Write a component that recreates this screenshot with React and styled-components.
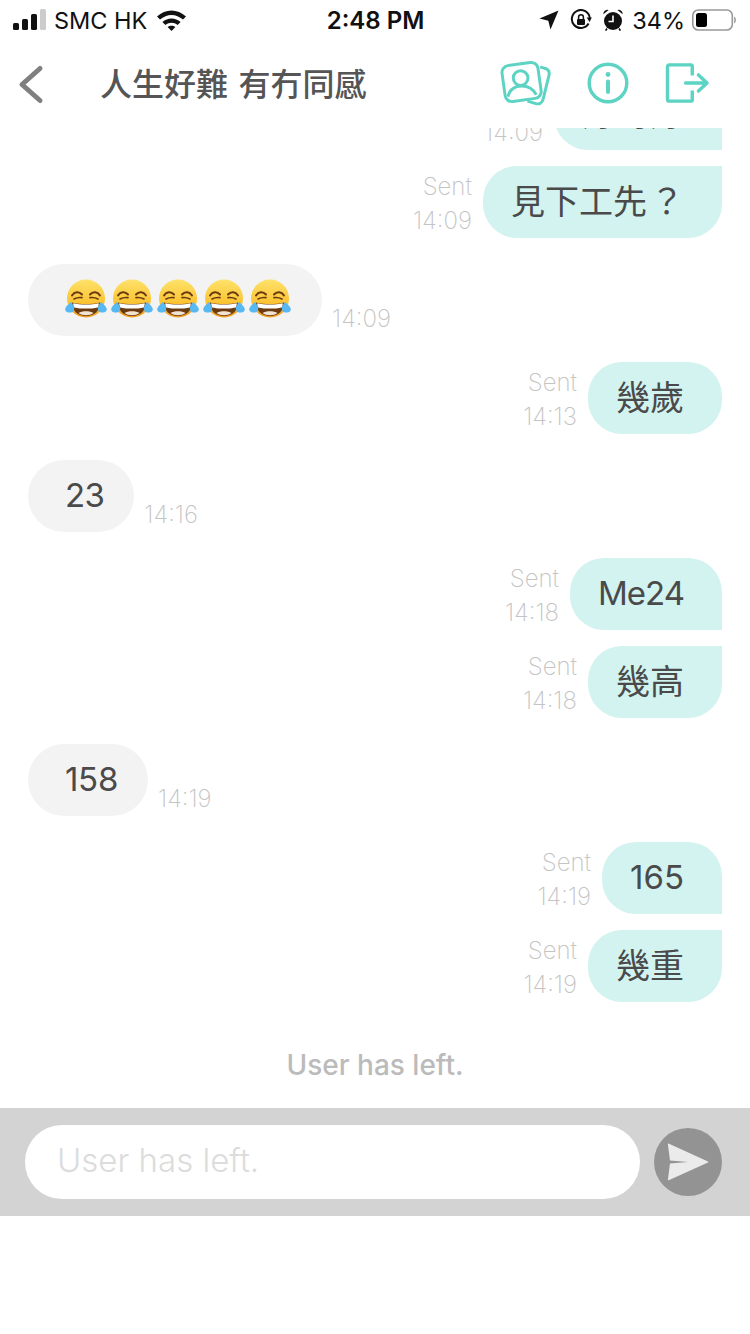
import React from 'react';
import styled, { createGlobalStyle } from 'styled-components';

const GlobalStyle = createGlobalStyle`
  html, body {
    margin: 0;
    padding: 0;
    background: #fff;
    font-family: Inter, "Noto Sans CJK TC", sans-serif;
  }
  * { box-sizing: border-box; }
`;

const TEAL = '#5dd3c3';

const Page = styled.div`
  width: 750px;
  height: 1334px;
  display: flex;
  flex-direction: column;
  overflow: hidden;
  background: #fff;
`;

const StatusBar = styled.div`
  height: 40px;
  flex: none;
  display: flex;
  align-items: center;
  justify-content: space-between;
  padding: 0 14px 0 13px;
  color: #111;
  font-size: 23.5px;
`;

const StatusSide = styled.div`
  width: 300px;
  display: flex;
  align-items: center;
  justify-content: ${(p) => (p.$end ? 'flex-end' : 'flex-start')};
`;

const Carrier = styled.span`
  margin: 0 9px 0 8px;
`;

const Clock = styled.span`
  margin-left: 2px;
  font-weight: 600;
  font-size: 24px;
`;

const StatusIcons = styled.div`
  display: flex;
  align-items: center;
  gap: 11px;
`;

const Percent = styled.span`
  margin: 0 7px 0 9px;
`;

const Header = styled.div`
  height: 88px;
  flex: none;
  display: flex;
  align-items: center;
  padding: 0 40px 0 18px;
`;

const BackIcon = styled.svg`
  width: 26px;
  height: 42px;
  flex: none;
`;

const Title = styled.div`
  margin: 0 0 4px 56px;
  flex: 1;
  font-size: 32px;
  font-weight: 500;
  color: #555;
  white-space: nowrap;
  word-spacing: 2px;
`;

const HeaderIcons = styled.div`
  display: flex;
  align-items: center;
  gap: 36px;
  margin-bottom: 2px;
`;

const MessageList = styled.div`
  height: 980px;
  flex: none;
  overflow: hidden;
  display: flex;
  flex-direction: column;
  justify-content: flex-end;
  padding: 0 28px;
`;

const Row = styled.div`
  flex: none;
  display: flex;
  gap: ${(p) => (p.$sent ? 11 : 10)}px;
  align-items: flex-end;
  justify-content: ${(p) => (p.$sent ? 'flex-end' : 'flex-start')};
  margin-top: ${(p) => (p.$grouped ? 16 : 26)}px;
`;

const Meta = styled.div`
  font-size: 24px;
  font-weight: 200;
  line-height: 34px;
  color: #c4c4c4;
  text-align: right;
`;

const cornerFor = (kind) => {
  if (kind === 'first') return '34px 34px 0 34px';
  if (kind === 'last') return '34px 0 34px 34px';
  return '34px';
};

const bubblePadding = (p) => {
  if (p.$emoji) return '0 29px 2px 35px';
  const bottom = p.$tracking !== undefined ? 2 : 6;
  return p.$sent ? `0 38px ${bottom}px 28px` : `0 30px ${bottom}px 37px`;
};

const Bubble = styled.div`
  height: 72px;
  display: flex;
  align-items: center;
  border-radius: ${(p) => (p.$sent ? cornerFor(p.$corner) : '36px')};
  background: ${(p) => (p.$sent ? '#d2f3ef' : '#f3f3f3')};
  padding: ${bubblePadding};
  color: #4a4a4a;
  font-size: ${(p) => (p.$tracking !== undefined ? '33px' : '34px')};
  letter-spacing: ${(p) => p.$tracking || 0}px;
  white-space: nowrap;
`;

const Notice = styled.div`
  flex: none;
  margin-top: 45px;
  margin-bottom: 25px;
  height: 36px;
  line-height: 36px;
  text-align: center;
  font-size: 28px;
  font-weight: 500;
  color: #bbb;
`;

const Composer = styled.div`
  height: 108px;
  flex: none;
  display: flex;
  align-items: center;
  gap: 14px;
  padding: 0 28px 0 25px;
  background: #d3d3d3;
`;

const InputBox = styled.div`
  flex: 1;
  height: 74px;
  display: flex;
  align-items: center;
  padding: 0 0 4px 32px;
  border-radius: 37px;
  background: #fff;
  color: #dcdcdc;
  font-size: 33px;
  font-weight: 300;
`;

const SendButton = styled.div`
  width: 68px;
  height: 68px;
  flex: none;
  display: flex;
  align-items: center;
  justify-content: center;
  border-radius: 50%;
  background: #939393;
`;

const EmojiRow = styled.div`
  display: flex;
`;

const EmojiSvg = styled.svg`
  width: 46px;
  height: 46px;
  display: block;
  flex: none;
`;

const SignalIcon = () => (
  <svg width="33" height="22" viewBox="0 0 33 22">
    <rect x="0" y="14" width="6" height="7" rx="1.5" fill="#111" />
    <rect x="9" y="10" width="6" height="11" rx="1.5" fill="#111" />
    <rect x="18" y="5" width="6" height="16" rx="1.5" fill="#111" />
    <rect x="27" y="0" width="6" height="21" rx="1.5" fill="#ccc" />
  </svg>
);

const WifiIcon = () => (
  <svg width="31" height="22" viewBox="0 0 31 22">
    <path d="M1 7.5C9.5 -0.5 21.5 -0.5 30 7.5L27 10.6C20.2 4.3 10.8 4.3 4 10.6Z" fill="#111" />
    <path d="M6.4 13C11.6 8.2 19.4 8.2 24.6 13L21.6 16C18 12.9 13 12.9 9.4 16Z" fill="#111" />
    <path d="M11.6 18.1C13.8 16.3 17.2 16.3 19.4 18.1L15.5 22Z" fill="#111" />
  </svg>
);

const LocationIcon = () => (
  <svg width="20" height="20" viewBox="0 0 20 20">
    <path d="M19.5 0.5L11.5 19.5L9.3 10.7L0.5 8.6Z" fill="#111" />
  </svg>
);

const RotationLockIcon = () => (
  <svg width="22" height="22" viewBox="0 0 22 22" fill="none">
    <path d="M18.6 14.6A9 9 0 1 1 19.8 9" stroke="#111" strokeWidth="2" />
    <path d="M16.6 8.6L21.8 8.6L19.6 13Z" fill="#111" />
    <rect x="7" y="10" width="8" height="6" rx="1" fill="#111" />
    <path d="M8.6 10V8.2a2.4 2.4 0 0 1 4.8 0V10" stroke="#111" strokeWidth="1.5" />
  </svg>
);

const AlarmIcon = () => (
  <svg width="20" height="22" viewBox="0 0 20 22" fill="none">
    <circle cx="10" cy="12" r="9" fill="#111" />
    <path d="M10 6.5V12.5H5.5" stroke="#fff" strokeWidth="1.6" />
    <path d="M0.4 5.2A4 4 0 0 1 5.6 1Z" fill="#111" />
    <path d="M19.6 5.2A4 4 0 0 0 14.4 1Z" fill="#111" />
    <path d="M4 19.5L2.6 21.6M16 19.5L17.4 21.6" stroke="#111" strokeWidth="1.6" />
  </svg>
);

const BatteryIcon = () => (
  <svg width="44" height="22" viewBox="0 0 44 22" fill="none">
    <rect x="0.8" y="1" width="39.5" height="20" rx="5.5" stroke="#999" strokeWidth="1.6" />
    <rect x="4" y="4" width="11" height="14" rx="2.5" fill="#000" />
    <path d="M42 7.5C43.4 8 44 9.4 44 11C44 12.6 43.4 14 42 14.5Z" fill="#aaa" />
  </svg>
);

const CardsIcon = () => (
  <svg width="51" height="46" viewBox="0 0 52 46" fill="none" stroke={TEAL} strokeWidth="3">
    <path d="M41 6.5L45.5 8C49 9 50.8 11.5 50 15L44 39.5C43 43.4 40 45 36.5 44L28 41.5" />
    <rect x="3.5" y="3.5" width="37" height="37" rx="7" transform="rotate(-8 22 22)" />
    <circle cx="21" cy="18" r="7.5" />
    <path d="M8 37C10 29 16 26 22 26C29 26 34 29 37 35" />
  </svg>
);

const InfoIcon = () => (
  <svg width="42" height="42" viewBox="0 0 42 42" fill="none" stroke={TEAL}>
    <circle cx="21" cy="21" r="18.8" strokeWidth="3.4" />
    <circle cx="21" cy="12.5" r="2.4" fill={TEAL} stroke="none" />
    <path d="M21 19.5V30" strokeWidth="4" strokeLinecap="round" />
  </svg>
);

const ExitIcon = () => (
  <svg width="45" height="40" viewBox="0 0 46 42" fill="none" stroke={TEAL} strokeWidth="3.6">
    <path d="M28 13V3.5C28 2.6 27.4 2 26.5 2H4C2.9 2 2 2.9 2 4V38C2 39.1 2.9 40 4 40H26.5C27.4 40 28 39.4 28 38.5V29" />
    <path d="M21 21H43M34.5 12.5L43.5 21L34.5 29.5" strokeLinecap="round" strokeLinejoin="round" />
  </svg>
);

const SendIcon = () => (
  <svg width="42" height="38" viewBox="0 0 42 38">
    <path
      d="M1.5 0.5C1 0.5 0.8 0.9 0.9 1.3L3 17.5L21 19L3 20.5L0.9 36.7C0.8 37.1 1.2 37.5 1.7 37.3L41 19.6C41.5 19.3 41.5 18.7 41 18.4Z"
      fill="#ebebeb"
    />
  </svg>
);

const LaughEmoji = ({ index }) => {
  const id = `face${index}`;
  return (
    <EmojiSvg viewBox="0 0 46 46">
      <defs>
        <linearGradient id={id} x1="0" y1="0" x2="0" y2="1">
          <stop offset="0" stopColor="#fde26a" />
          <stop offset="0.6" stopColor="#fbc434" />
          <stop offset="1" stopColor="#ee9a1e" />
        </linearGradient>
      </defs>
      <circle cx="23" cy="22.5" r="19" fill={`url(#${id})`} />
      <path d="M9 26.5C17 28.6 29 28.6 37 26.5C37 35 31 40 23 40C15 40 9 35 9 26.5Z" fill="#6b3a10" />
      <path d="M10.2 27.2C17 29 29 29 35.8 27.2C35.8 29 35.4 30.2 34.8 31.4C28 33 18 33 11.2 31.4C10.6 30.2 10.2 29 10.2 27.2Z" fill="#fff" />
      <path d="M15.5 37C19 34.6 27 34.6 30.5 37C28.4 38.6 26 39.2 23 39.2C20 39.2 17.6 38.6 15.5 37Z" fill="#f2e3d0" />
      <g fill="none" stroke="#6b3a10" strokeLinecap="round">
        <path d="M9 19.5C11.5 15.5 16 15 19 18.5" strokeWidth="2" />
        <path d="M11 23C13.5 21.6 16.5 21.2 19 21.6" strokeWidth="1.6" />
        <path d="M37 19.5C34.5 15.5 30 15 27 18.5" strokeWidth="2" />
        <path d="M35 23C32.5 21.6 29.5 21.2 27 21.6" strokeWidth="1.6" />
      </g>
      <path d="M8 26C10 29 11.6 31 11.2 33.4C10.8 35.8 8.4 36.8 6 36.6C3.6 36.4 2 35 2.2 33C2.4 30.8 5.4 28.4 8 26Z" fill="#58b8f2" />
      <path d="M38 26C36 29 34.4 31 34.8 33.4C35.2 35.8 37.6 36.8 40 36.6C42.4 36.4 44 35 43.8 33C43.6 30.8 40.6 28.4 38 26Z" fill="#58b8f2" />
    </EmojiSvg>
  );
};

const messages = [
  { sent: true, text: '好呀好', time: '14:09', corner: 'first', grouped: true },
  { sent: true, text: '見下工先\u200a？', time: '14:09', corner: 'last', grouped: true },
  { sent: false, emoji: 5, time: '14:09' },
  { sent: true, text: '幾歲', time: '14:13' },
  { sent: false, text: '23', time: '14:16', tracking: -0.6 },
  { sent: true, text: 'Me24', time: '14:18', corner: 'first', tracking: -1 },
  { sent: true, text: '幾高', time: '14:18', corner: 'last', grouped: true },
  { sent: false, text: '158', time: '14:19', tracking: -0.3 },
  { sent: true, text: '165', time: '14:19', corner: 'first', tracking: 0 },
  { sent: true, text: '幾重', time: '14:19', corner: 'last', grouped: true },
];

const Message = ({ sent, text, time, corner, grouped, tracking, emoji }) => {
  const bubble = (
    <Bubble $sent={sent} $corner={corner} $tracking={tracking} $emoji={!!emoji}>
      {emoji ? (
        <EmojiRow>
          {Array.from({ length: emoji }, (_, i) => (
            <LaughEmoji key={i} index={i} />
          ))}
        </EmojiRow>
      ) : (
        text
      )}
    </Bubble>
  );
  return (
    <Row $sent={sent} $grouped={grouped}>
      {sent ? (
        <>
          <Meta>
            Sent
            <br />
            {time}
          </Meta>
          {bubble}
        </>
      ) : (
        <>
          {bubble}
          <Meta>{time}</Meta>
        </>
      )}
    </Row>
  );
};

export default function App() {
  return (
    <Page>
      <GlobalStyle />
      <StatusBar>
        <StatusSide>
          <SignalIcon />
          <Carrier>SMC HK</Carrier>
          <WifiIcon />
        </StatusSide>
        <Clock>2:48 PM</Clock>
        <StatusSide $end>
          <StatusIcons>
            <LocationIcon />
            <RotationLockIcon />
            <AlarmIcon />
          </StatusIcons>
          <Percent>34%</Percent>
          <BatteryIcon />
        </StatusSide>
      </StatusBar>

      <Header>
        <BackIcon viewBox="0 0 26 42" fill="none">
          <path d="M22 5.5L4 21.5L22 37.5" stroke="#808080" strokeWidth="5" strokeLinecap="round" strokeLinejoin="round" />
        </BackIcon>
        <Title>人生好難 有冇同感</Title>
        <HeaderIcons>
          <CardsIcon />
          <InfoIcon />
          <ExitIcon />
        </HeaderIcons>
      </Header>

      <MessageList>
        {messages.map((m, i) => (
          <Message key={i} {...m} />
        ))}
        <Notice>User has left.</Notice>
      </MessageList>

      <Composer>
        <InputBox>User has left.</InputBox>
        <SendButton>
          <SendIcon />
        </SendButton>
      </Composer>
    </Page>
  );
}
